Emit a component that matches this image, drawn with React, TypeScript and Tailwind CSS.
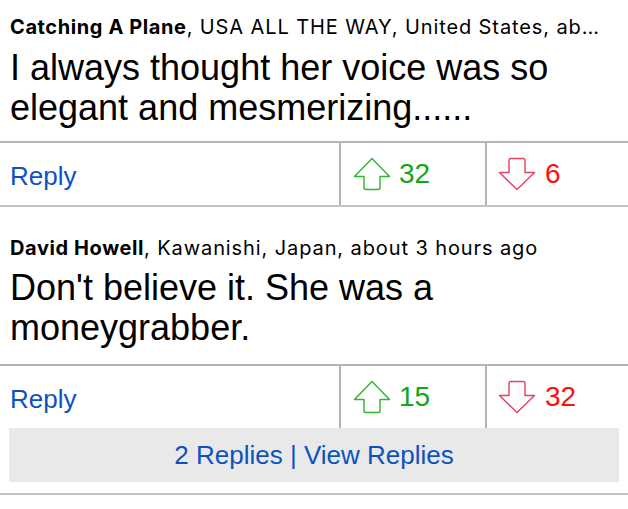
import React from "react";

type CommentProps = {
  author: string;
  meta: string;
  body: string;
  up: number;
  down: number;
  top: string;
  gap: string;
  bottom: string;
  replies?: number;
};

function UpArrow() {
  return (
    <svg width="38" height="34" viewBox="0 0 38 34" fill="none">
      <path
        d="M19 1.5 L36.5 19.5 L27 19.5 L27 30.5 Q27 32.5 25 32.5 L13 32.5 Q11 32.5 11 30.5 L11 19.5 L1.5 19.5 Z"
        stroke="#2db52d"
        strokeWidth="1.4"
        strokeLinejoin="round"
      />
    </svg>
  );
}

function DownArrow() {
  return (
    <svg width="38" height="34" viewBox="0 0 38 34" fill="none">
      <path
        d="M19 32.5 L36.5 15.5 L27 15.5 L27 3.5 Q27 1.5 25 1.5 L13 1.5 Q11 1.5 11 3.5 L11 15.5 L1.5 15.5 Z"
        stroke="#e5405f"
        strokeWidth="1.4"
        strokeLinejoin="round"
      />
    </svg>
  );
}

function Comment({ author, meta, body, up, down, top, gap, bottom, replies }: CommentProps) {
  return (
    <div>
      <div className={`px-[10px] ${top} ${bottom} border-b-2 border-[#b4b4b4]`}>
        <p className="whitespace-nowrap text-[20px] leading-[24px] text-black font-['Inter',sans-serif] tracking-[0.9px]">
          <span className="font-bold tracking-[0.6px]">{author}</span>, {meta}
        </p>
        <p className={`${gap} text-[36px] leading-[40px] text-black`}>{body}</p>
      </div>
      <div className={`flex ${replies ? "h-[62px]" : "h-[64px] border-b-2 border-[#c4c4c4]"}`}>
        <div className="w-[339px] flex items-center px-[10px] pt-[5px] text-[26px] text-[#0c52bf]">
          Reply
        </div>
        <div className="w-[146px] border-l-2 border-[#b4b4b4] flex items-center pl-[12px] gap-[8px]">
          <UpArrow />
          <span className="text-[28px] text-[#14a614]">{up}</span>
        </div>
        <div className="flex-1 border-l-2 border-[#b4b4b4] flex items-center pl-[11px] gap-[9px]">
          <DownArrow />
          <span className="text-[28px] text-[#fb1010]">{down}</span>
        </div>
      </div>
      {replies ? (
        <div className="pb-[11px] border-b-2 border-[#c4c4c4]">
          <div className="mx-[9px] h-[54px] bg-[#e9e9e9] flex items-center justify-center text-[26px] text-[#0c52bf]">
            {replies} Replies | View Replies
          </div>
        </div>
      ) : null}
    </div>
  );
}

export default function App() {
  return (
    <div className="w-[628px] h-[509px] bg-white overflow-hidden font-['Liberation_Sans',Arial,sans-serif]">
      <Comment
        author="Catching A Plane"
        meta="USA ALL THE WAY, United States, ab…"
        body="I always thought her voice was so elegant and mesmerizing......"
        up={32}
        down={6}
        top="pt-[15px]"
        gap="mt-[9px]"
        bottom="pb-[13px]"
      />
      <Comment
        author="David Howell"
        meta="Kawanishi, Japan, about 3 hours ago"
        body="Don't believe it. She was a moneygrabber."
        up={15}
        down={32}
        top="pt-[29px]"
        gap="mt-[8px]"
        bottom="pb-[16px]"
        replies={2}
      />
    </div>
  );
}
